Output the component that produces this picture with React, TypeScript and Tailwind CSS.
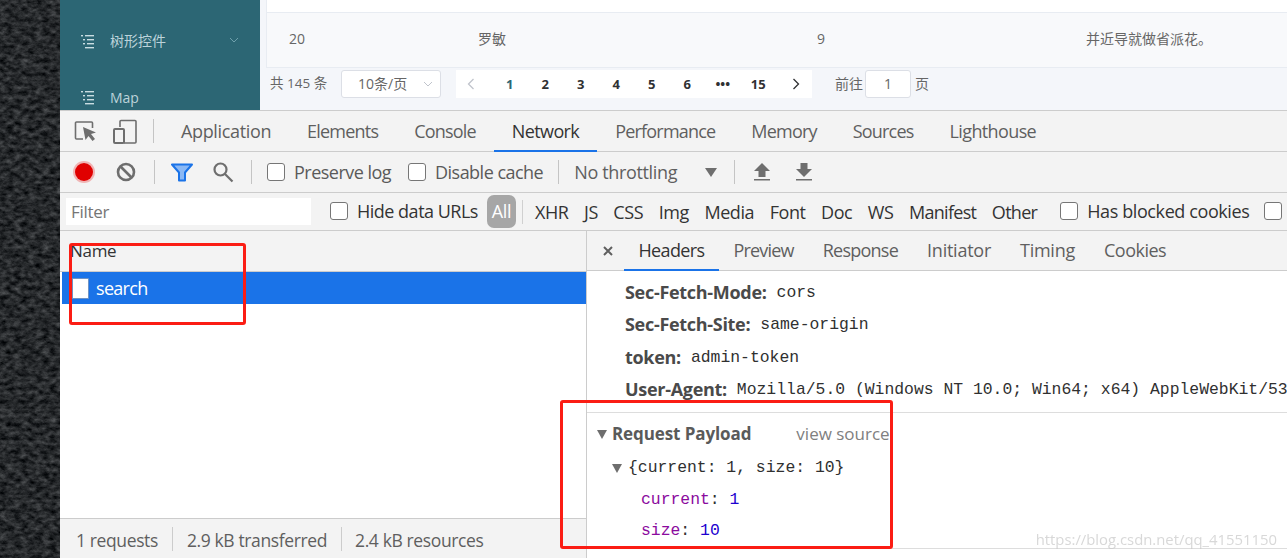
import type { FC, ReactNode } from 'react';

const ui = { fontFamily: '"Open Sans", "Noto Sans CJK SC", sans-serif' };

const ListIcon: FC = () => (
  <svg width="15" height="14" viewBox="0 0 15 14" fill="#c9dde2">
    <rect x="1" y="0" width="2" height="1.4" />
    <rect x="5" y="0" width="9" height="1.4" />
    <rect x="3" y="4" width="2" height="1.4" />
    <rect x="7" y="4" width="7" height="1.4" />
    <rect x="3" y="8" width="2" height="1.4" />
    <rect x="7" y="8" width="7" height="1.4" />
    <rect x="5" y="12" width="9" height="1.4" />
  </svg>
);

const Check: FC<{ label: string; className?: string; labelClass?: string }> = ({ label, className = '', labelClass = 'text-[#5a5a5a] tracking-[-0.52px]' }) => (
  <div className={`flex items-center shrink-0 whitespace-nowrap ${className}`}>
    <span className="w-[18px] h-[18px] rounded-[3px] border border-[#767676] bg-white mr-[9px]" />
    <span className={`text-[18px] leading-none ${labelClass}`}>{label}</span>
  </div>
);

const Sep: FC<{ className?: string }> = ({ className = '' }) => (
  <span className={`w-px h-[24px] bg-[#c4c4c4] shrink-0 ${className}`} />
);

const panels = [
  { name: 'Application', fit: 'tracking-[-0.35px]' },
  { name: 'Elements', fit: 'tracking-[-0.8px]' },
  { name: 'Console', fit: 'tracking-[-0.8px]' },
  { name: 'Network', fit: 'tracking-[-0.62px]' },
  { name: 'Performance', fit: 'tracking-[-0.8px]' },
  { name: 'Memory', fit: 'tracking-[-0.8px]' },
  { name: 'Sources', fit: 'tracking-[-0.8px]' },
  { name: 'Lighthouse', fit: 'tracking-[-0.62px]' },
];
const detailTabs = [
  { name: 'Headers', fit: 'tracking-[-0.65px]' },
  { name: 'Preview', fit: 'tracking-[-0.8px]' },
  { name: 'Response', fit: 'tracking-[-0.75px]' },
  { name: 'Initiator', fit: 'tracking-[-0.25px]' },
  { name: 'Timing', fit: 'tracking-[-0.25px]' },
  { name: 'Cookies', fit: 'tracking-[-0.5px]' },
];
const types = ['XHR', 'JS', 'CSS', 'Img', 'Media', 'Font', 'Doc', 'WS', 'Manifest', 'Other'];
const pages = ['1', '2', '3', '4', '5', '6', '•••', '15'];

const Header: FC<{ name: string; children: ReactNode }> = ({ name, children }) => (
  <div className="h-[32.5px] flex items-center pl-[38px] whitespace-nowrap">
    <span className="font-bold text-[18px] tracking-[-0.3px] text-[#4a4a4a] mr-[10px]">{name}</span>
    <span className="mt-[2px] font-['Liberation_Mono',monospace] text-[16.4px] text-[#303030]">{children}</span>
  </div>
);

const App: FC = () => {
  return (
    <div className="w-[1287px] h-[558px] overflow-hidden flex bg-[#24282b] relative" style={ui}>
      <svg className="w-[60px] h-full shrink-0" viewBox="0 0 60 558" preserveAspectRatio="none">
        <filter id="stone" colorInterpolationFilters="sRGB">
          <feTurbulence type="fractalNoise" baseFrequency="0.14 0.22" numOctaves="4" seed="7" />
          <feColorMatrix values="0.42 0 0 0 -0.06  0.42 0 0 0 -0.05  0.42 0 0 0 -0.04  0 0 0 0 1" />
        </filter>
        <rect width="60" height="558" fill="#24282b" />
        <rect width="60" height="558" filter="url(#stone)" />
      </svg>
      <div className="flex-1 min-w-0 flex flex-col">
        {/* app behind devtools */}
        <div className="h-[111px] shrink-0 flex border-b border-[#cccccc]">
          <div className="w-[200px] bg-[#2c6674] text-[#bcd3da] text-[14px] pl-[20px] pt-[34px]">
            <div className="flex items-center h-[16px]">
              <ListIcon />
              <span className="ml-[15px] mb-[3px]">树形控件</span>
              <svg className="ml-[63px] mb-[5px]" width="10" height="6" viewBox="0 0 10 6" fill="none" stroke="#6fa0ac"><path d="M1 1l4 4 4-4" /></svg>
            </div>
            <div className="flex items-center h-[16px] mt-[40px]">
              <ListIcon />
              <span className="ml-[15px] mb-[2px]">Map</span>
            </div>
          </div>
          <div className="flex-1 min-w-0 bg-[#f4f6fa] pl-[6px]">
            <div className="h-[13px] bg-white border-b border-l border-[#e8ecf2]" />
            <div className="h-[55px] pb-[4px] bg-[#f8f9fb] border-b border-l border-[#e8ecf2] flex items-center text-[14px] text-[#666666]">
              <span className="ml-[22px] w-[189px]">20</span>
              <span className="w-[339px]">罗敏</span>
              <span className="w-[269px]">9</span>
              <span>并近导就做省派花。</span>
            </div>
            <div className="flex items-start pt-[2px] h-[42px] text-[14px] leading-[28px] text-[#666666]">
              <span className="ml-[4px] w-[71px] text-[13.5px] leading-[26px]">共 145 条</span>
              <div className="w-[100px] h-[28px] bg-white border border-[#dcdfe6] rounded-[3px] flex items-center pl-[16px]">
                <span>10条/页</span>
                <svg className="ml-[16px]" width="10" height="6" viewBox="0 0 10 6" fill="none" stroke="#c0c4cc"><path d="M1 1l4 4 4-4" /></svg>
              </div>
              <div className="ml-[15px] w-[356px] h-[28px] bg-white flex items-center text-[13px] font-bold text-[#303133]">
                <svg className="ml-[11px] mr-[17px]" width="8" height="12" viewBox="0 0 8 12" fill="none" stroke="#c0c4cc" strokeWidth="1.3"><path d="M6.5 1L1.5 6l5 5" /></svg>
                {pages.map((p) => (
                  <span key={p} className={`w-[35.5px] text-center ${p === '1' ? 'text-[#2c6674]' : ''}`}>{p}</span>
                ))}
                <svg className="ml-[16px]" width="8" height="12" viewBox="0 0 8 12" fill="none" stroke="#303133" strokeWidth="1.3"><path d="M1.5 1l5 5-5 5" /></svg>
              </div>
              <span className="ml-[23px]">前往</span>
              <div className="ml-[2px] w-[46px] h-[28px] bg-white border border-[#dcdfe6] rounded-[3px] flex items-center justify-center">1</div>
              <span className="ml-[4px]">页</span>
            </div>
          </div>
        </div>

        {/* devtools panel tabs */}
        <div className="h-[41px] shrink-0 bg-[#f3f3f3] border-b border-[#cccccc] flex items-center pl-[14px]">
          <svg width="23" height="24" viewBox="0 0 23 24" fill="none">
            <path d="M9 20H2.5a1 1 0 0 1-1-1V4a1 1 0 0 1 1-1h15a1 1 0 0 1 1 1v5" stroke="#6e6e6e" strokeWidth="1.6" />
            <path d="M9 8l13 5.5-5 1.5 4 5-2.500 2-4-5-3 4z" fill="#6e6e6e" />
          </svg>
          <svg className="ml-[16px]" width="24" height="25" viewBox="0 0 24 25" fill="none">
            <path d="M7 8V2.500a1 1 0 0 1 1-1h14a1 1 0 0 1 1 1V23a1 1 0 0 1-1 1H11" stroke="#6e6e6e" strokeWidth="1.600" />
            <rect x="1" y="10" width="10" height="14" rx="1" stroke="#6e6e6e" strokeWidth="2" />
          </svg>
          <Sep className="ml-[16px]" />
          <div className="flex h-full ml-[9px]">
            {panels.map((p) => (
              <div
                key={p.name}
                className={`relative h-full flex items-center px-[18px] text-[18px] whitespace-nowrap ${p.fit} ${p.name === 'Network' ? 'text-[#333333]' : 'text-[#5f5f5f]'}`}
              >
                {p.name}
                {p.name === 'Network' && <span className="absolute left-0 right-0 bottom-[-1px] h-[2px] bg-[#1a73e8]" />}
              </div>
            ))}
          </div>
        </div>

        {/* network toolbar */}
        <div className="h-[41px] shrink-0 bg-[#f3f3f3] border-b border-[#cccccc] flex items-center pl-[15px] whitespace-nowrap">
          <span className="w-[18px] h-[18px] rounded-full bg-[#e00000] shadow-[0_0_0_2px_#f0b4b4] shrink-0" />
          <svg className="ml-[23px]" width="20" height="20" viewBox="0 0 20 20" fill="none" stroke="#6e6e6e" strokeWidth="2.600">
            <circle cx="10" cy="10" r="8" />
            <path d="M4.500 4.500l11 11" />
          </svg>
          <Sep className="ml-[18px]" />
          <svg className="ml-[16px]" width="22" height="19" viewBox="0 0 22 19">
            <path d="M1 1.500h20l-7 8v8H8v-8z" fill="#8ab8f5" stroke="#1a73e8" strokeWidth="2" strokeLinejoin="round" />
          </svg>
          <svg className="ml-[19px]" width="22" height="22" viewBox="0 0 22 22" fill="none" stroke="#6e6e6e" strokeWidth="2.200">
            <circle cx="8.500" cy="8.500" r="6" />
            <path d="M13 13l7.500 7.500" />
          </svg>
          <Sep className="ml-[17px]" />
          <Check label="Preserve log" className="ml-[15px]" />
          <Check label="Disable cache" className="ml-[17px]" />
          <Sep className="ml-[15px]" />
          <span className="ml-[15px] text-[18px] tracking-[-0.35px] text-[#5f5f5f]">No throttling</span>
          <span className="ml-[28px] w-0 h-0 border-l-[6px] border-r-[6px] border-t-[9px] border-l-transparent border-r-transparent border-t-[#6e6e6e]" />
          <Sep className="ml-[17px]" />
          <svg className="ml-[19px]" width="16" height="18" viewBox="0 0 16 18" fill="#6e6e6e">
            <path d="M8 0l8 8h-4.500v6h-7V8H0z" />
            <rect y="16" width="16" height="1.500" />
          </svg>
          <svg className="ml-[26px]" width="16" height="18" viewBox="0 0 16 18" fill="#6e6e6e">
            <path d="M4.500 0h7v6H16l-8 8-8-8h4.500z" />
            <rect y="16" width="16" height="1.500" />
          </svg>
        </div>

        {/* filter bar */}
        <div className="h-[38px] shrink-0 bg-[#f3f3f3] border-b border-[#cccccc] flex items-center pl-[6px] whitespace-nowrap overflow-hidden">
          <div className="w-[245px] h-[27px] shrink-0 bg-white flex items-center pl-[5px] text-[17px] text-[#757575] tracking-[-0.3px]">Filter</div>
          <Check label="Hide data URLs" className="ml-[19px] mb-[2px]" labelClass="text-[#333333] tracking-[-0.5px]" />
          <span className="ml-[9px] w-[29px] h-[33px] shrink-0 rounded-[7px] bg-[#a6a6a6] text-white text-[18px] tracking-[-0.35px] flex items-center justify-center">All</span>
          <span className="ml-[6px] w-px h-[24px] bg-[#d0d0d0] shrink-0" />
          <div className="ml-[12px] mt-[2px] flex gap-[15.5px] text-[18px] tracking-[-0.42px] text-[#333333] shrink-0">
            {types.map((t) => (
              <span key={t} className={t === 'Manifest' || t === 'Other' ? 'tracking-[-0.7px]' : ''}>{t}</span>
            ))}
          </div>
          <Check label="Has blocked cookies" className="ml-[23px] mb-[2px]" labelClass="text-[#333333] tracking-[-0.4px]" />
          <span className="ml-[15px] mb-[2px] w-[18px] h-[18px] rounded-[3px] border border-[#767676] bg-white shrink-0" />
        </div>

        {/* requests + details */}
        <div className="flex-1 min-h-0 flex bg-white">
          <div className="w-[527px] shrink-0 flex flex-col border-r border-[#cccccc]">
            <div className="h-[41px] bg-[#f3f3f3] border-b border-[#cccccc] pl-[10px] pt-[7px] text-[17px] tracking-[-0.3px] text-[#333333] leading-[26px]">Name</div>
            <div className="h-[32px] ml-[2px] bg-[#1a73e8] flex items-center pl-[10px] text-white text-[18px] tracking-[-0.7px]">
              <span className="w-[17px] h-[21px] bg-white border border-[#6f93c4] rounded-[1px] mr-[7px]" />
              search
            </div>
            <div className="flex-1" />
            <div className="h-[40px] bg-[#f3f3f3] border-t border-[#cccccc] flex items-center pl-[16px] text-[17.500px] tracking-[-0.38px] text-[#5f5f5f] whitespace-nowrap">
              <span className="mt-[3px]">1 requests</span>
              <span className="mx-[14px] w-px h-[24px] bg-[#cccccc]" />
              <span className="mt-[3px]">2.9 kB transferred</span>
              <span className="mx-[13.500px] w-px h-[24px] bg-[#cccccc]" />
              <span className="mt-[3px]">2.4 kB resources</span>
            </div>
          </div>
          <div className="flex-1 min-w-0 flex flex-col overflow-hidden">
            <div className="h-[40px] shrink-0 bg-[#f3f3f3] border-b border-[#cccccc] flex items-center">
              <div className="w-[37px] pl-[16px]">
                <svg width="10" height="10" viewBox="0 0 10 10" fill="none" stroke="#5f5f5f" strokeWidth="2"><path d="M1 1l8 8M9 1l-8 8" /></svg>
              </div>
              {detailTabs.map((t) => (
                <div
                  key={t.name}
                  className={`relative h-full flex items-center px-[14.500px] text-[18px] ${t.fit} ${t.name === 'Headers' ? 'text-[#333333]' : 'text-[#5f5f5f]'}`}
                >
                  {t.name}
                  {t.name === 'Headers' && <span className="absolute left-0 right-0 bottom-[-1px] h-[2px] bg-[#1a73e8]" />}
                </div>
              ))}
            </div>
            <div className="pt-[5px] shrink-0">
              <Header name="Sec-Fetch-Mode:">cors</Header>
              <Header name="Sec-Fetch-Site:">same-origin</Header>
              <Header name="token:">admin-token</Header>
              <Header name="User-Agent:">Mozilla/5.0 (Windows NT 10.0; Win64; x64) AppleWebKit/537.36</Header>
            </div>
            <div className="mt-[6px] border-t border-[#dddddd] pt-[5px] shrink-0">
              <div className="h-[32px] flex items-center pl-[10px] whitespace-nowrap">
                <span className="w-0 h-0 border-l-[5.500px] border-r-[5.500px] border-t-[9px] border-l-transparent border-r-transparent border-t-[#6e6e6e]" />
                <span className="ml-[5px] font-bold text-[17px] tracking-[-0.1px] text-[#5a5a5a]">Request Payload</span>
                <span className="ml-[45px] text-[17px] text-[#808080]">view source</span>
              </div>
              <div className="h-[34px] flex items-center pl-[25px] pt-[3px] font-['Liberation_Mono',monospace] text-[16.4px] text-[#303030] whitespace-nowrap">
                <span className="w-0 h-0 border-l-[5.500px] border-r-[5.500px] border-t-[9px] border-l-transparent border-r-transparent border-t-[#6e6e6e] mr-[6px]" />
                {'{current: 1, size: 10}'}
              </div>
              <div className="h-[31px] flex items-center pl-[54px] pt-[2px] font-['Liberation_Mono',monospace] text-[16.4px] whitespace-nowrap">
                <span className="text-[#8b0a9e]">current</span><span className="text-[#303030]">:&nbsp;</span><span className="text-[#1c00cf]">1</span>
              </div>
              <div className="h-[31px] flex items-center pl-[54px] pt-[2px] font-['Liberation_Mono',monospace] text-[16.4px] whitespace-nowrap">
                <span className="text-[#8b0a9e]">size</span><span className="text-[#303030]">:&nbsp;</span><span className="text-[#1c00cf]">10</span>
              </div>
            </div>
            <div className="border-t border-[#dddddd] mt-[2px]" />
          </div>
        </div>
      </div>

      {/* annotations drawn on the screenshot */}
      <div className="absolute left-[69px] top-[243px] w-[177px] h-[82px] border-[3px] border-[#fb1d14] rounded-[3px]" />
      <div className="absolute left-[560px] top-[400px] w-[333px] h-[149px] border-[3px] border-[#fb1d14] rounded-[3px]" />
      <div className="absolute right-[10px] bottom-[8px] text-[14.85px] text-[#c8c8c8] opacity-70">https://blog.csdn.net/qq_41551150</div>
    </div>
  );
};

export default App;
